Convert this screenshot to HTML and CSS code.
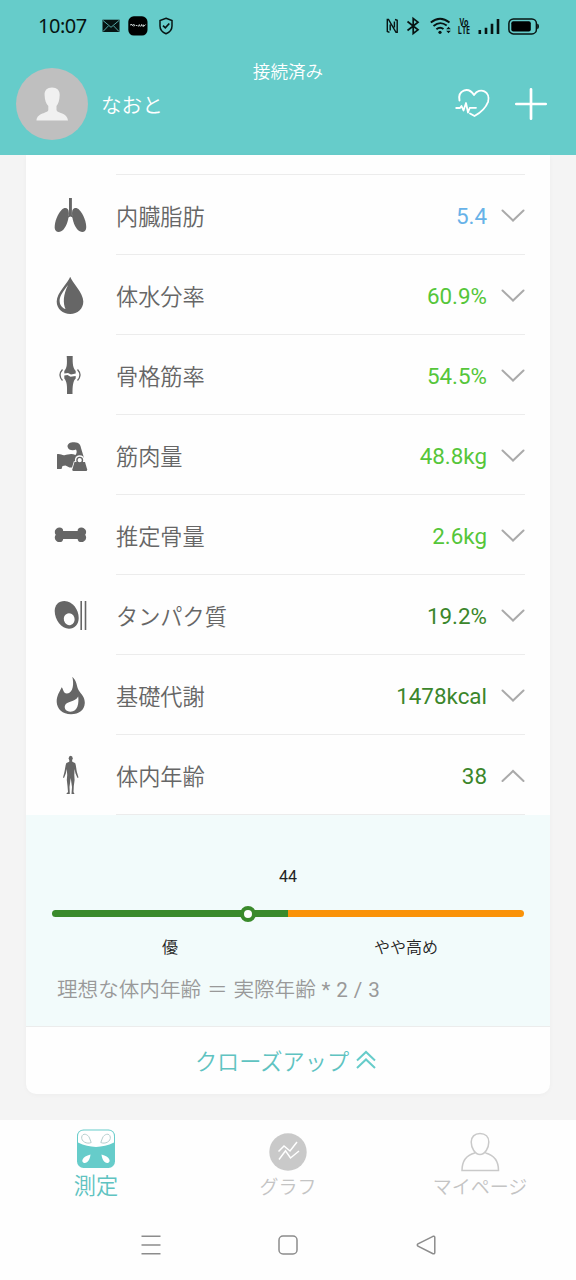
FILE: index.html
```html
<!DOCTYPE html>
<html lang="ja">
<head>
<meta charset="utf-8">
<title>測定</title>
<link rel="stylesheet" href="styles.css">
</head>
<body>
<div class="screen">
  <header class="header">
    <div class="status">
      <span class="clock">10:07</span>
      <svg class="mail" width="18" height="14" viewBox="0 0 18 14"><rect x=".5" y=".7" width="17" height="12.3" fill="#071413"/><path d="M1 1.5 9 8.3 17 1.5M1 12.5 6.3 7M17 12.5 11.7 7" fill="none" stroke="#66ccca" stroke-width=".8"/></svg>
      <svg class="app" width="20" height="20" viewBox="0 0 20 20"><rect x=".3" y=".3" width="19.2" height="19.2" rx="5.5" fill="#000"/><path d="M2 9l2-.6.6 1.6M5 8.6l1.6.3-.8 1.6M7.8 9.5h1.6M10.3 10.6l1-2 1 2M13 10.3l.7-1.9.8 2M15.6 8.6v1.9l2-2" fill="none" stroke="#dfe9e9" stroke-width=".9"/></svg>
      <svg class="shield" width="16" height="18" viewBox="0 0 16 18"><path d="M8 1.2 14 3.6V9c0 3.600-2.500 6.300-6 7.800C4.500 15.300 2 12.600 2 9V3.600Z" fill="none" stroke="#071413" stroke-width="1.500"/><path d="M5 8.700 7.300 10.800 11.300 6.500" fill="none" stroke="#071413" stroke-width="1.700"/></svg>
      <span class="spacer"></span>
      <svg class="nfc" width="13" height="16" viewBox="0 0 13 16"><path d="M3.500 14.300 1.300 13.500V1.500H2.500L10 14.300H11.200V2.300L9 1.500M4.200 6.500V12.500M8.400 3.500V9.500" fill="none" stroke="#071413" stroke-width="1.400"/></svg>
      <svg class="bt" width="14" height="18" viewBox="0 0 14 18"><path d="M1.500 4.500 12 12.800 7.200 16.500V1.500L12 5.200 1.500 13.500" fill="none" stroke="#071413" stroke-width="1.700"/></svg>
      <svg class="wifi" width="22" height="18" viewBox="0 0 22 18"><path d="M.8 5.500Q10 -2 19.500 5.500M3.500 9Q10 3.500 16.700 8.500M6.400 12.300Q10 9.200 13.500 12" fill="none" stroke="#071413" stroke-width="1.900"/><circle cx="10" cy="15.300" r="1.600" fill="#071413"/><path d="M16.200 12.200 18.500 9.800 20.800 12.200ZM16.200 13.800 18.500 16.200 20.800 13.800Z" fill="#071413"/></svg>
      <span class="volte">Vo<br>LTE</span>
      <svg class="signal" width="22" height="17" viewBox="0 0 22 17"><path d="M1.800 16V12M8 16V9.800M14 16V5.800M20 16V1" stroke="#071413" stroke-width="2.600"/></svg>
      <svg class="battery" width="32" height="17" viewBox="0 0 32 17"><rect x=".9" y=".9" width="27.500" height="15" rx="4.500" fill="none" stroke="#071413" stroke-width="1.500"/><rect x="3.300" y="3.300" width="19.500" height="10.200" rx="2" fill="#000"/><path d="M29.200 5.800C31.600 5.800 31.600 11 29.200 11Z" fill="#071413"/></svg>
    </div>
    <div class="connected">接続済み</div>
    <div class="profile">
      <svg class="avatar" width="72" height="72" viewBox="0 0 72 72"><circle cx="36" cy="36" r="36" fill="#bfbfbf"/><path d="M36 19.500C31 19.500 28.300 22.500 28.600 27 28.700 32 30 35.500 32.300 38V42C32 45.500 21 44.500 20.500 52.500H52C51.500 44.500 41 45.500 40.500 42V38C42.500 35.500 43.500 32 43.700 27 43.900 22.500 41 19.500 36 19.500Z" fill="#f0f0f0"/></svg>
      <span class="name">なおと</span>
      <span class="spacer"></span>
      <svg class="heart" width="36" height="32" viewBox="0 0 36 32"><path d="M4.500 12.500C2.500 2.500 13 -2 19 7 25 -1.500 36 3.500 33 14 30.500 20.500 25 25 19.500 28L15 25.500" fill="none" stroke="#fff" stroke-width="1.900" stroke-linecap="round" stroke-linejoin="round"/><path d="M1.200 20H5L6.500 18 8.500 22.500 11 15 13 24.500 14.800 19.800H21" fill="none" stroke="#fff" stroke-width="1.800" stroke-linecap="round" stroke-linejoin="round"/></svg>
      <svg class="plus" width="32" height="32" viewBox="0 0 32 32"><path d="M16 1.300V30.700M1.300 16H30.700" stroke="#fff" stroke-width="2.700" stroke-linecap="round"/></svg>
    </div>
  </header>

  <main class="content">
    <section class="card">
      <div class="row-rest"></div>
      <div class="row">
        <svg class="icon" viewBox="0 0 42 80"><path d="M19 23H21.900V40L24 43 20.400 41.500 16.800 43 19 40Z"/><path d="M18.900 38C18.900 33 15 31.500 11.500 35 7.500 39.500 4.400 47 4.700 53 5.200 58 10.500 57.800 13.500 54.500 17 50.500 18.900 43.500 18.900 38Z"/><path d="M22 38C22 33 25.900 31.500 29.400 35 33.400 39.500 36.500 47 36.200 53 35.700 58 30.400 57.800 27.400 54.500 23.900 50.500 22 43.500 22 38Z"/></svg>
        <div class="line"><span class="label">内臓脂肪</span><span class="value blue">5.4</span><svg class="chev" viewBox="0 0 24 14"><path d="M1.500 1.500 12 11.500 22.500 1.500"/></svg></div>
      </div>
      <div class="row">
        <svg class="icon" viewBox="0 0 42 80"><path d="M20.200 21.700C22 27.500 33.300 37.500 33.300 46.500 33.300 54 27.500 59 20.200 59S6.700 54 6.700 46.500C6.700 37.500 18 28 20.200 21.700Z"/><path class="cut" d="M18 30C12.500 37 9 42 9.700 47 10.200 51 13 53.500 15.500 54 13 48 13 40 18 30Z"/></svg>
        <div class="line"><span class="label">体水分率</span><span class="value green">60.9%</span><svg class="chev" viewBox="0 0 24 14"><path d="M1.500 1.500 12 11.500 22.500 1.500"/></svg></div>
      </div>
      <div class="row">
        <svg class="icon" viewBox="0 0 42 80"><path d="M16.700 21H22.700C22.500 29 23 33 25.700 36V38.500L21 39.500 18 38 14.300 38.500V36C17 33 17.300 29 16.700 21ZM14.300 40.500 17.500 40 20.500 41.700 25.700 41V43.500C23 46 22.500 51 22.500 59H17C17.300 51 17 47 14.300 43.500Z"/><path d="M12.500 34.500Q7.500 40 12.500 45.500M27.500 34.500Q32.500 40 27.500 45.500" fill="none" stroke="#666" stroke-width="1.300"/></svg>
        <div class="line"><span class="label">骨格筋率</span><span class="value green">54.5%</span><svg class="chev" viewBox="0 0 24 14"><path d="M1.500 1.500 12 11.500 22.500 1.500"/></svg></div>
      </div>
      <div class="row">
        <svg class="icon" viewBox="0 0 42 80"><path d="M17.500 31.500C17.500 28.500 20.500 27 24.500 27.200 29 27.500 30.500 29.500 31 33L34 43 25 52.500 19.500 52.500 15.500 50.500 12.500 51 11.500 54H7V39.300C10 38.500 12 40.500 14.500 40.200 18 39.500 21.500 38 25.500 40 27 38 27 36 26 34.500 23.500 36 18 35.500 17.500 31.500Z"/><circle class="cut" cx="29.700" cy="45" r="4.800"/><path d="M24.500 47H35L37.200 54.500Q37.300 56 36 56H23.500Q22.200 56 22.300 54.500Z" stroke="#fefefe" stroke-width="1.600" paint-order="stroke"/><circle cx="29.700" cy="45.200" r="2.800" fill="#fefefe" stroke="#666" stroke-width="1.400"/></svg>
        <div class="line"><span class="label">筋肉量</span><span class="value green">48.8kg</span><svg class="chev" viewBox="0 0 24 14"><path d="M1.500 1.500 12 11.500 22.500 1.500"/></svg></div>
      </div>
      <div class="row">
        <svg class="icon" viewBox="0 0 42 80"><path d="M8.500 35.500 12 36Q20.500 36 29 36L32.500 35.500V44.500L29 44Q20.500 44 12 44L8.500 44.500Z"/><circle cx="9.500" cy="36.300" r="3.700"/><circle cx="8.300" cy="37" r="3.500"/><circle cx="9.500" cy="43.400" r="3.700"/><circle cx="8.300" cy="42.600" r="3.500"/><circle cx="31.300" cy="36.300" r="3.700"/><circle cx="32.600" cy="37" r="3.500"/><circle cx="31.300" cy="43.400" r="3.700"/><circle cx="32.600" cy="42.600" r="3.500"/></svg>
        <div class="line"><span class="label">推定骨量</span><span class="value green">2.6kg</span><svg class="chev" viewBox="0 0 24 14"><path d="M1.500 1.500 12 11.500 22.500 1.500"/></svg></div>
      </div>
      <div class="row">
        <svg class="icon" viewBox="0 0 42 80"><path d="M4.700 36C4.700 30 8.500 26 14.500 26 22.500 26 28.700 34.500 28.700 43 28.700 49.500 24.500 53.700 19 53.700 11.500 53.700 4.700 45 4.700 36Z"/><ellipse class="cut" cx="19.200" cy="44.200" rx="5.400" ry="6" transform="rotate(-15 19.200 44.200)"/><path d="M31.200 26V55M35.500 26V55" stroke="#666" stroke-width="1.600"/></svg>
        <div class="line"><span class="label">タンパク質</span><span class="value dark">19.2%</span><svg class="chev" viewBox="0 0 24 14"><path d="M1.500 1.500 12 11.500 22.500 1.500"/></svg></div>
      </div>
      <div class="row">
        <svg class="icon" viewBox="0 0 42 80"><path d="M22.300 21.700C27 26 26.500 31 28.500 35 31 39 35 42 34.800 48 34.500 55 29 59.300 21 59.300 12.500 59.300 7 54 6.700 47 6.500 41 9.500 37 11.700 32.300 13.500 34 13.200 38.700 17 38.500 23.500 38 24 28 22.300 21.700Z"/><path class="cut" d="M28.200 41.500C29 48 28 56.500 20.500 56.700 16 56.500 14 53.500 15 50.500 16.500 46 25 47.500 28.200 41.500Z"/></svg>
        <div class="line"><span class="label">基礎代謝</span><span class="value dark">1478kcal</span><svg class="chev" viewBox="0 0 24 14"><path d="M1.500 1.500 12 11.500 22.500 1.500"/></svg></div>
      </div>
      <div class="row">
        <svg class="icon" viewBox="0 0 42 80"><ellipse cx="20.700" cy="23.300" rx="2" ry="2.500"/><path d="M19.500 25H22L22.300 26.800 25 28C26 29 26.200 34 27.200 38L28.500 42.500 27.500 43 25.500 38.500 24.500 34 24.300 40 24.600 45 23.800 51 23.500 57 24.500 59H21.500L22 52 20.700 43 19.500 52 19.800 59H16.200L18 57 17.500 51 16.800 45 17.200 40 16.800 34 15.800 38.500 14 43 13 42.500 14.200 38C15.200 34 15.500 29 16.500 28L19.200 26.800Z"/></svg>
        <div class="line"><span class="label">体内年齢</span><span class="value dark">38</span><svg class="chev" viewBox="0 0 24 14"><path d="M1.500 12 12 2 22.500 12"/></svg></div>
      </div>
      <div class="detail">
        <div class="threshold">44</div>
        <div class="bar"><span class="knob"></span></div>
        <div class="levels"><span>優</span><span>やや高め</span></div>
        <p class="note">理想な体内年齢 ＝ 実際年齢 <span>* 2 / 3</span></p>
      </div>
      <div class="close">クローズアップ<svg width="20" height="20" viewBox="0 0 20 20"><path d="M1 10.500 10 2 19 10.500M1 18 10 9.500 19 18"/></svg></div>
    </section>
  </main>

  <nav class="tabs">
    <div class="tab active">
      <svg width="40" height="40" viewBox="0 0 40 40"><rect x="1" y="1.600" width="38" height="38.400" rx="6.500" fill="#66ccca"/><path d="M2 14.500V8.300Q2 2.500 8 2.500H32Q38 2.500 38 8.300V14.500Q20 23.300 2 14.500Z" fill="#fff"/><path d="M5.700 9C6.500 4.500 12 6 13.500 10L15.200 14.500C11 16.500 5 13.500 5.700 9ZM34.300 9C33.500 4.500 28 6 26.500 10L24.800 14.500C29 16.500 35 13.500 34.300 9Z" fill="none" stroke="#b7cfcf" stroke-width="1"/><path d="M14.500 26.500C14 31.500 11.500 35.500 8.300 35 4.500 34.200 6 28.500 14.500 26.500ZM25.500 26.500C26 31.500 28.500 35.500 31.700 35 35.500 34.200 34 28.500 25.500 26.500Z" fill="#fff"/></svg>
      <span>測定</span>
    </div>
    <div class="tab">
      <svg width="40" height="40" viewBox="0 0 40 40"><circle cx="20" cy="24" r="18.700" fill="#c9c9c9"/><path d="M10.500 23.500 16 18 22 23 29 14M11 31.500 17.500 22.800 22.500 30 31 23" fill="none" stroke="#fff" stroke-width="1.500"/></svg>
      <span>グラフ</span>
    </div>
    <div class="tab">
      <svg width="40" height="40" viewBox="0 0 40 40"><path d="M20 5.500C14.500 5.500 11.200 9 11.200 14 11.200 20 15 26.500 20 26.500S28.800 20 28.800 14C28.800 9 25.500 5.500 20 5.500ZM14.800 25C7 27 2 33 2 42.500H38.500C38.500 33 33.500 27 25.500 25" fill="none" stroke="#c9c9c9" stroke-width="1.500"/></svg>
      <span>マイページ</span>
    </div>
  </nav>
  <div class="sysnav">
    <svg width="22" height="22" viewBox="0 0 22 22"><path d="M1.500 2.200H20.500M1.500 11H20.500M1.500 19.800H20.500"/></svg>
    <svg width="22" height="22" viewBox="0 0 22 22"><rect x="2" y="2" width="18" height="18" rx="4"/></svg>
    <svg width="22" height="22" viewBox="0 0 22 22"><path d="M18 2.300 3 9.800Q1.600 11 3 12.200L18 19.700Q19.800 20.300 19.800 18.500V3.500Q19.800 1.800 18 2.300Z"/></svg>
  </div>
</div>
</body>
</html>
```
FILE: styles.css
```css
* { box-sizing: border-box; }
body {
  margin: 0;
  background: #fefefe;
  font-family: Roboto, "Noto Sans CJK JP DemiLight", "Noto Sans CJK JP", sans-serif;
  font-weight: 350;
}
svg { display: block; flex: none; overflow: visible; }
.screen { width: 576px; height: 1280px; display: flex; flex-direction: column; overflow: hidden; }
.spacer { flex: 1; }

.header { height: 155px; background: #66ccca; color: #fff; }
.status { height: 52px; display: flex; align-items: center; padding: 0 36px 0 38px; }
.clock { font: 400 20px/28px "Noto Sans", sans-serif; letter-spacing: -.5px; color: #071413; width: 64px; white-space: nowrap; }
.app { margin-left: 8px; }
.shield { margin-left: 10px; }
.nfc { margin-right: -1px; }
.bt { margin-left: 8px; }
.wifi { margin-left: 10px; }
.volte {
  margin-left: 5px; width: 14px;
  display: flex; justify-content: center; text-align: center;
  font: 700 10px/8.500px "Open Sans", sans-serif; color: #071413;
  transform: scaleX(.72);
}
.signal { margin-left: 7px; }
.battery { margin-left: 8px; }
.connected { height: 16px; font-size: 17.600px; line-height: 41px; text-align: center; }
.profile { height: 72px; display: flex; align-items: center; padding: 0 29px 0 16px; }
.name { margin-left: 13px; font-size: 20.600px; }
.heart { margin-right: 24px; }

.content { height: 965px; background: #f4f4f4; padding: 0 26px; }
.card { height: 939px; background: #fefefe; border-radius: 0 0 10px 10px; box-shadow: 0 1px 5px rgba(0, 0, 0, .03); overflow: hidden; }
.row-rest { height: 20px; margin: 0 25px 0 90px; border-bottom: 1px solid #ececec; }
.row { height: 80px; display: flex; padding: 0 25px 0 24px; }
.icon { width: 42px; height: 80px; margin-right: 24px; fill: #666; }
.cut { fill: #fefefe; }
.line { flex: 1; display: flex; align-items: center; border-bottom: 1px solid #ececec; line-height: 32px; }
.label { flex: 1; font-size: 22.200px; color: #666; padding-top: 4px; }
.value { font-size: 22.400px; font-weight: 400; padding-top: 3px; }
.blue { color: #67b2e8; }
.green { color: #55c63a; }
.dark { color: #3b862b; }
.chev { width: 24px; height: 14px; margin: 2px .5px 0 13.500px; fill: none; stroke: #aaa; stroke-width: 2; stroke-linecap: round; }

.detail { height: 212px; background: #f2fbfb; border-bottom: 1px solid #ececec; padding: 50px 26px 0; color: #222; font-size: 16px; }
.threshold { text-align: center; line-height: 24px; font-weight: 400; }
.bar { position: relative; height: 7px; margin-top: 21px; border-radius: 4px; background: linear-gradient(90deg, #3a8a2b 50%, #fa9208 50%); }
.knob { position: absolute; left: 188px; top: -4.500px; width: 16px; height: 16px; border: 4px solid #3a8a2b; border-radius: 50%; background: #fff; }
.levels { display: flex; margin-top: 19px; line-height: 24px; }
.levels span { flex: 1; text-align: center; }
.note { margin: 14px 0 0 5px; line-height: 32px; font-size: 20.600px; word-spacing: .8px; color: #999; white-space: nowrap; }
.note span { font-weight: 400; }
.close { height: 67px; display: flex; justify-content: center; align-items: center; gap: 7px; padding: 0 5px 1px 0; font-size: 22.200px; color: #5fc3c1; }
.close svg { fill: none; stroke: #66ccca; stroke-width: 2; }

.tabs { height: 90px; display: flex; background: #fefefe; padding-top: 8px; }
.tab { flex: 1; display: flex; flex-direction: column; align-items: center; color: #c4c4c4; font-size: 19px; }
.tab span { line-height: 32px; margin-top: 4px; }
.tab.active { color: #5fc3c1; font-size: 22.200px; }
.tab.active span { margin-top: 2px; }
.sysnav { height: 70px; display: flex; justify-content: center; align-items: center; gap: 115.500px; }
.sysnav svg { fill: none; stroke: #8c8c8c; stroke-width: 1.500; }
```
